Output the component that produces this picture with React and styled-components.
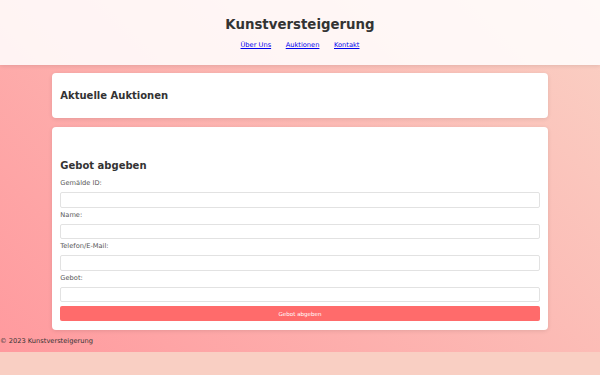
import React from 'react';
import styled, {createGlobalStyle} from 'styled-components';

const GlobalStyle = createGlobalStyle `
    html {
        background: #f9cfc3;
    }
    body {
        margin: 0;
        font-family: "DejaVu Sans", "Liberation Sans", sans-serif;
        font-size: 6.667px;
        color: #333;
        background: linear-gradient(45deg, #ff9a9e 0%, #fad0c4 99%, #fad0c4 100%);
    }
`

const Header = styled.header `
    padding: 8.33px 0 8.9px;
    text-align: center;
    background: rgba(255, 255, 255, 0.86);
    box-shadow: 0 1px 4px rgba(0, 0, 0, 0.1);
`

const Title = styled.h1 `
    margin: 8.93px 0;
    font-size: 13.333px;
    line-height: 15.5px;
`

const NavList = styled.ul `
    display: flex;
    justify-content: center;
    margin: 6.67px 0;
    padding: 0;
    list-style: none;
    line-height: 7.76px;
`

const NavItem = styled.li `
    margin: 0 7.3px;
`

const Main = styled.main `
    width: 496px;
    margin: 0 auto;
    padding-top: 8.3px;
`

const Card = styled.section `
    background: #fff;
    border-radius: 4px;
    padding: ${props => props.$top || 8.33}px 8.33px 8.33px;
    margin-bottom: 8.5px;
    box-shadow: 0 1px 4px rgba(0, 0, 0, 0.1);
`

const Heading = styled.h2 `
    margin: 8.3px 0;
    font-size: 10px;
    line-height: 11.64px;
`

const Label = styled.label `
    display: block;
    margin: 0.64px 0 4px;
    line-height: 7.76px;
    color: #555;
`

const Input = styled.input `
    display: block;
    box-sizing: border-box;
    width: 100%;
    height: 15.8px;
    margin: 0 0 4px;
    padding: 0 3px;
    border: 1px solid #e2e2e2;
    border-radius: 2px;
    font-size: 5.556px;
    background: #fff;
`

const SubmitButton = styled.button `
    display: block;
    width: 100%;
    height: 14.8px;
    padding: 0;
    border: none;
    border-radius: 2px;
    background: #ff6b6b;
    color: #fff;
    font-family: inherit;
    font-size: 5.556px;
`

const Footer = styled.footer `
    padding: 0 0 6.4px;
    line-height: 7.76px;
`

const fields = [
    {id: 'painting', label: 'Gemälde ID:'},
    {id: 'name', label: 'Name:'},
    {id: 'contact', label: 'Telefon/E-Mail:'},
    {id: 'bid', label: 'Gebot:'}
]

const App = () => (
    <>
        <GlobalStyle/>
        <Header>
            <Title>Kunstversteigerung</Title>
            <nav>
                <NavList>
                    <NavItem><a href="#about">Über Uns</a></NavItem>
                    <NavItem><a href="#auctions">Auktionen</a></NavItem>
                    <NavItem><a href="#contact">Kontakt</a></NavItem>
                </NavList>
            </nav>
        </Header>
        <Main>
            <Card id="auctions">
                <Heading>Aktuelle Auktionen</Heading>
            </Card>
            <Card $top={25.3}>
                <Heading>Gebot abgeben</Heading>
                <form onSubmit={e => e.preventDefault()}>
                    {fields.map(({id, label}) => (
                        <div key={id}>
                            <Label htmlFor={id}>{label}</Label>
                            <Input id={id} type="text"/>
                        </div>
                    ))}
                    <SubmitButton type="submit">Gebot abgeben</SubmitButton>
                </form>
            </Card>
        </Main>
        <Footer>© 2023 Kunstversteigerung</Footer>
    </>
);

export default App
